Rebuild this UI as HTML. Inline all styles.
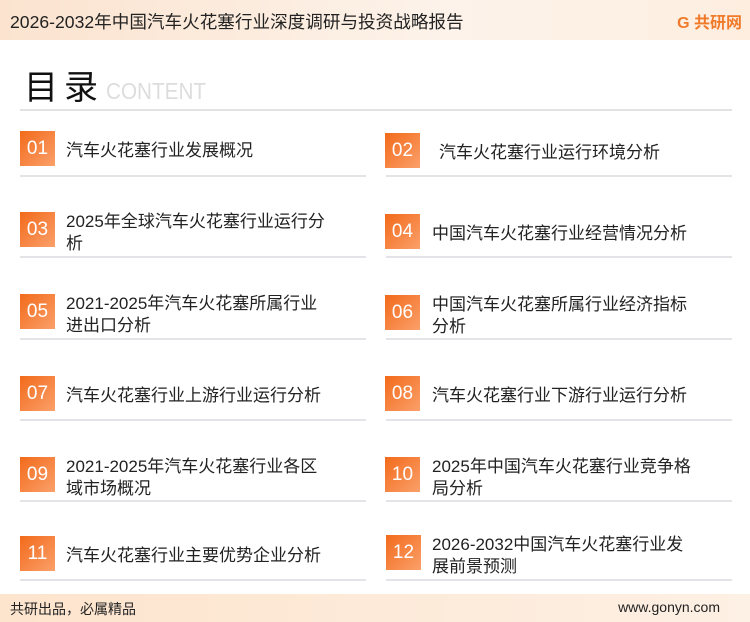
<!DOCTYPE html>
<html><head><meta charset="utf-8"><style>
*{margin:0;padding:0;box-sizing:border-box}
body{width:750px;height:622px;position:relative;background:#fff;font-family:"Liberation Sans","Noto Sans CJK SC",sans-serif;overflow:hidden;color:#222}
.hd{position:absolute;left:0;top:0;width:750px;height:40px;background:linear-gradient(90deg,#fbe3cf,#fdf3ea 60%,#fdeee0);}
.hd .t{position:absolute;left:10px;top:9px;font-size:17.6px;color:#222}
.hd .lg{position:absolute;right:8px;top:9px;font-size:16px;font-weight:bold;color:#f07a2a}
.ft{position:absolute;left:0;top:594px;width:750px;height:28px;background:linear-gradient(90deg,#fde4cd,#fdf0e4);font-size:14px}
.ft .a{position:absolute;left:10px;top:5px}
.ft .b{position:absolute;right:30px;top:5px}
.ml{position:absolute;left:24px;top:64px;font-size:34px;line-height:48px;color:#111;letter-spacing:6px}
.ct{position:absolute;left:106px;top:78px;font-size:23px;color:#ddd;transform:scaleX(.9);transform-origin:left}
.top{position:absolute;left:20px;top:109px;width:712px;height:2px;background:#e2e2e2}
.n{position:absolute;width:35px;height:35px;background:linear-gradient(135deg,#f26a1b,#fba06a);color:#fff;font-size:19px;text-align:center;line-height:35px}
.x{position:absolute;font-size:17px;line-height:22px;color:#222;margin-top:1px}
.ln{position:absolute;height:2px;background:#e4e4e8;width:346px}
</style></head><body>
<div class="hd"><div class="t">2026-2032年中国汽车火花塞行业深度调研与投资战略报告</div><div class="lg">G 共研网</div></div>
<div class="ml">目录</div><div class="ct">CONTENT</div>
<div class="top"></div>

<div class="n" style="left:20px;top:131px">01</div><div class="x" style="left:66px;top:139px">汽车火花塞行业发展概况</div>
<div class="n" style="left:385px;top:133px">02</div><div class="x" style="left:439px;top:141px">汽车火花塞行业运行环境分析</div>
<div class="ln" style="left:20px;top:175px"></div><div class="ln" style="left:386px;top:175px"></div>

<div class="n" style="left:20px;top:212px">03</div><div class="x" style="left:66px;top:210px">2025年全球汽车火花塞行业运行分<br>析</div>
<div class="n" style="left:385px;top:214px">04</div><div class="x" style="left:432px;top:222px">中国汽车火花塞行业经营情况分析</div>
<div class="ln" style="left:20px;top:256px"></div><div class="ln" style="left:386px;top:256px"></div>

<div class="n" style="left:20px;top:294px">05</div><div class="x" style="left:66px;top:292px">2021-2025年汽车火花塞所属行业<br>进出口分析</div>
<div class="n" style="left:385px;top:295px">06</div><div class="x" style="left:432px;top:293px">中国汽车火花塞所属行业经济指标<br>分析</div>
<div class="ln" style="left:20px;top:338px"></div><div class="ln" style="left:386px;top:338px"></div>

<div class="n" style="left:20px;top:376px">07</div><div class="x" style="left:66px;top:384px">汽车火花塞行业上游行业运行分析</div>
<div class="n" style="left:385px;top:376px">08</div><div class="x" style="left:432px;top:384px">汽车火花塞行业下游行业运行分析</div>
<div class="ln" style="left:20px;top:419px"></div><div class="ln" style="left:386px;top:419px"></div>

<div class="n" style="left:20px;top:457px">09</div><div class="x" style="left:66px;top:455px">2021-2025年汽车火花塞行业各区<br>域市场概况</div>
<div class="n" style="left:385px;top:457px">10</div><div class="x" style="left:432px;top:455px">2025年中国汽车火花塞行业竞争格<br>局分析</div>
<div class="ln" style="left:20px;top:500px"></div><div class="ln" style="left:386px;top:500px"></div>

<div class="n" style="left:20px;top:536px">11</div><div class="x" style="left:66px;top:544px">汽车火花塞行业主要优势企业分析</div>
<div class="n" style="left:386px;top:535px">12</div><div class="x" style="left:432px;top:533px">2026-2032中国汽车火花塞行业发<br>展前景预测</div>
<div class="ln" style="left:20px;top:579px"></div><div class="ln" style="left:386px;top:579px"></div>

<div class="ft"><div class="a">共研出品，必属精品</div><div class="b">www.gonyn.com</div></div>
</body></html>
